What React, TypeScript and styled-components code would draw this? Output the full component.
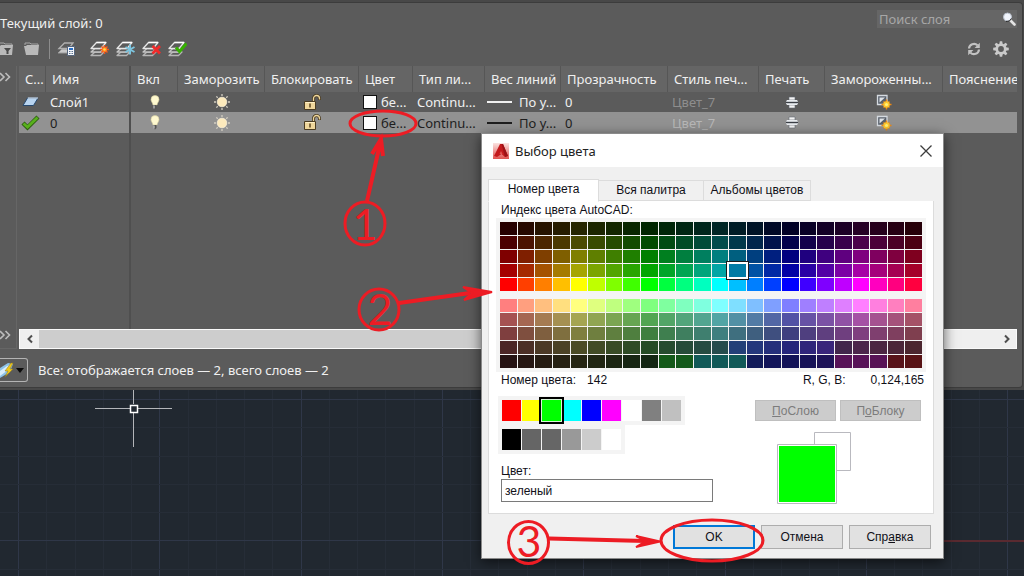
import React, { useState } from "react";
import styled, { createGlobalStyle, css } from "styled-components";

const RED = "#ed1c24";

const GlobalStyle = createGlobalStyle`
  *, *::before, *::after { box-sizing: border-box; }
  body { margin: 0; background: #212830; }
  button, input { font: inherit; color: inherit; margin: 0; padding: 0; border: 0; border-radius: 0; background: none; }
`;

const Page = styled.div`
  position: relative;
  display: flex;
  flex-direction: column;
  min-height: 100vh;
  overflow: hidden;
  background: #484848;
  font-family: "Noto Sans", "Open Sans", sans-serif;
  font-size: 13px;
  line-height: 16px;
  color: #f0f0f0;
`;

/* ---------- layer manager ---------- */

const LayerPanel = styled.section`
  margin: 2px 1px 2px 0;
  padding: 7px 5px 0 0;
  background: #5b5b5b;
  border: 1px solid #3c3c3c;
  border-left: 0;
  border-radius: 0 4px 4px 0;
`;

const TopBar = styled.div`
  display: flex;
  justify-content: space-between;
  height: 26px;
`;

const CurrentLayer = styled.h1`
  margin: 5px 0 0;
  font-size: 13px;
  line-height: 16px;
  font-weight: 400;
`;

const SearchBox = styled.label`
  display: flex;
  align-items: center;
  width: 140px;
  height: 18px;
  padding: 0 1px 0 2px;
  background: #666;
  input { flex: 1; min-width: 0; outline: 0; }
  input::placeholder { color: #a6a6a6; opacity: 1; }
`;

const Toolbar = styled.div`
  display: flex;
  justify-content: space-between;
  align-items: center;
  height: 30px;
  padding: 0 8px 4px 0;
`;

const ToolGroup = styled.div<{ $gap: number }>`
  display: flex;
  align-items: center;
  gap: ${(p) => p.$gap}px;
`;

const Separator = styled.span`
  width: 1px;
  height: 20px;
  margin-left: 2px;
  background: #8c8c8c;
`;

const IconButton = styled.button`
  display: block;
  svg { display: block; }
`;

const Workspace = styled.div`
  display: flex;
  gap: 2px;
`;

const Gutter = styled.div`
  display: flex;
  flex-direction: column;
  justify-content: space-between;
  width: 17px;
  padding: 6px 0 8px;
  border-right: 1px solid #666;
  border-bottom: 1px solid #666;
`;

const GridArea = styled.div`
  flex: 1;
  min-width: 0;
`;

const TableWrap = styled.div`
  display: flex;
  align-items: flex-start;
  height: 263px;
  background: linear-gradient(#4f4f4f, #4f4f4f) 110px 0 / 2px 100% no-repeat;
`;

const Table = styled.table`
  width: 100%;
  table-layout: fixed;
  border-collapse: separate;
  border-spacing: 0;
  th, td {
    overflow: hidden;
    white-space: nowrap;
    padding: 0 0 0 4px;
    text-align: left;
    font-weight: 400;
  }
  th {
    height: 26px;
    padding-left: 6px;
    background: #656565;
    border-right: 1px solid #565656;
  }
  th:last-child { border-right: 0; }
  td:first-child { padding-right: 5px; }
  th:nth-child(2), td:nth-child(2) { border-right: 2px solid #4f4f4f; }
  svg { display: block; }
`;

const Row = styled.tr<{ $selected?: boolean }>`
  height: ${(p) => (p.$selected ? 21 : 20)}px;
  background: ${(p) => (p.$selected ? "#929292" : "transparent")};
  color: ${(p) => (p.$selected ? "#1e1e1e" : "#f0f0f0")};
`;

const Muted = styled.span<{ $selected?: boolean }>`
  color: ${(p) => (p.$selected ? "#b8b8b8" : "#8e8e8e")};
`;

const Centered = styled.span`
  display: flex;
  justify-content: center;
  margin-left: -4px;
`;

const Inline = styled.span<{ $gap: number }>`
  display: flex;
  align-items: center;
  gap: ${(p) => p.$gap}px;
`;

const ColorBox = styled.span`
  flex: none;
  width: 14px;
  height: 14px;
  background: #fff;
  border: 1px solid #111;
`;

const Weight = styled.span`
  flex: none;
  width: 25px;
  height: 2px;
  margin-left: -2px;
  background: currentColor;
`;

const ScrollBar = styled.div`
  display: flex;
  align-items: center;
  height: 20px;
  background: #efefef;
  border: 1px solid #fafafa;
`;

const ScrollButton = styled.button`
  display: flex;
  align-items: center;
  justify-content: center;
  width: 19px;
  height: 18px;
`;

const Track = styled.div`
  flex: 1;
  height: 18px;
`;

const Thumb = styled.div`
  width: 80%;
  height: 100%;
  background: #cdcdcd;
`;

const StatusBar = styled.footer`
  display: flex;
  align-items: center;
  gap: 10px;
  height: 38px;
  padding-top: 3px;
`;

const FilterButton = styled.button`
  display: flex;
  align-items: center;
  width: 28px;
  height: 24px;
  border: 1px solid #b4b4b4;
  border-left: 0;
  border-radius: 0 3px 3px 0;
`;

/* ---------- drawing area ---------- */

const DrawingArea = styled.main`
  flex: 1;
  min-height: 186px;
  background: #212830;
  overflow: hidden;
  svg { display: block; }
`;

/* ---------- colour dialog ---------- */

const Dialog = styled.div`
  position: absolute;
  left: 481px;
  top: 133px;
  width: 463px;
  background: #f0f0f0;
  border: 1px solid #8a8a8a;
  box-shadow: 0 3px 12px rgba(0, 0, 0, 0.6);
  font-family: "Liberation Sans", Arial, sans-serif;
  font-size: 12px;
  line-height: 16px;
  color: #101018;
`;

const TitleBar = styled.header`
  display: flex;
  align-items: center;
  gap: 6px;
  height: 33px;
  padding: 0 10px 0 11px;
  background: #fff;
  font-family: "Noto Sans", "Open Sans", sans-serif;
  h2 { flex: 1; margin: 0; font-size: 13px; font-weight: 400; color: #222; }
`;

const DialogBody = styled.div`
  padding: 12px 9px 0 6px;
`;

const TabList = styled.div`
  display: flex;
  align-items: flex-end;
`;

const Tab = styled.button<{ $active?: boolean }>`
  height: 21px;
  padding-bottom: 1px;
  border: 1px solid #dcdcdc;
  border-left-width: 0;
  background: #f0f0f0;
  ${(p) =>
    p.$active &&
    css`
      height: 23px;
      margin-bottom: -1px;
      padding-bottom: 3px;
      background: #fff;
      border-left-width: 1px;
      border-bottom-color: #fff;
    `}
  &:nth-child(1) { width: 111px; }
  &:nth-child(2) { width: 105px; }
  &:nth-child(3) { width: 107px; }
`;

const TabPanel = styled.div`
  padding: 1px 7px 8px;
  background: #fff;
  border: 1px solid #dcdcdc;
  border-top-width: 0;
`;

const Caption = styled.p`
  margin: 0 0 0 5px;
`;

const PaletteBox = styled.div`
  display: grid;
  gap: 8px;
  padding: 4px;
  background: #f4f4f4;
`;

const Palette = styled.div`
  display: grid;
  grid-template-columns: repeat(24, 1fr);
  grid-auto-rows: 13px;
  gap: 1px;
`;

const Cell = styled.button<{ $color: string; $selected?: boolean }>`
  background: ${(p) => p.$color};
  ${(p) =>
    p.$selected &&
    css`
      position: relative;
      box-shadow: 0 0 0 2px #fff, 0 0 0 3px #1a1a1a;
    `}
`;

const InfoRow = styled.div`
  display: flex;
  padding: 0 2px 0 5px;
  span:nth-child(2) { flex: 1; margin-left: 11px; }
  span:nth-child(4) { margin-left: 25px; }
`;

const Lower = styled.div`
  display: flex;
  justify-content: space-between;
  padding: 8px 5px 0 2px;
`;

const Swatches = styled.div<{ $count: number }>`
  display: grid;
  grid-template-columns: repeat(${(p) => p.$count}, 19px);
  grid-auto-rows: 21px;
  gap: 1px;
  width: max-content;
  padding: 4px;
  background: #f4f4f4;
`;

const Swatch = styled.button<{ $color: string; $selected?: boolean }>`
  background: ${(p) => p.$color};
  ${(p) =>
    p.$selected &&
    css`
      position: relative;
      box-shadow: 0 0 0 1px #d8f4d8, 0 0 0 3px #000;
    `}
`;

const Field = styled.label`
  display: block;
  width: 212px;
  margin: 9px 0 0 3px;
  input {
    display: block;
    width: 100%;
    height: 23px;
    padding: 0 3px;
    background: #fff;
    border: 1px solid #7a7a7a;
    outline: 0;
  }
`;

const SideTools = styled.div`
  padding-top: 4px;
  svg { display: block; margin: 11px 0 0 22px; }
`;

const ButtonRow = styled.div`
  display: flex;
  gap: 4px;
`;

const FlatButton = styled.button`
  width: 81px;
  height: 21px;
  background: #ccc;
  border: 1px solid #bfbfbf;
  color: #7c7c7c;
`;

const DialogFooter = styled.footer`
  display: flex;
  justify-content: flex-end;
  gap: 6px;
  padding: 11px 3px 9px 0;
`;

const PushButton = styled.button<{ $primary?: boolean }>`
  width: 82px;
  height: 24px;
  background: #e1e1e1;
  border: ${(p) => (p.$primary ? "2px solid #0078d7" : "1px solid #adadad")};
`;

const Annotations = styled.svg`
  position: absolute;
  left: 0;
  top: 0;
  pointer-events: none;
`;

/* ---------- icons ---------- */

const FolderIcon = ({ filter }: { filter?: boolean }) => (
  <svg width={filter ? 14 : 16} height="14" viewBox={filter ? "2 0 14 14" : "0 0 16 14"}>
    <path d="M1 3V1h5l1 1h7v2" fill="none" stroke="#a6a6a6" />
    <path d="M0 4h2l1-1h12l-1 10H2z" fill="#b9b9b9" />
    {filter && <path d="M6 6h7L10.500 9v3h-2V9z" fill="#4a4a4a" />}
  </svg>
);

const Sheets = () => (
  <g fill="#5b5b5b" stroke="#b4b4b4" strokeWidth="1.300" strokeLinejoin="round">
    <path d="M1 15.500 5 12H14L10.500 15.500z" />
    <path d="M1 12 5 8.500H14L10.500 12z" stroke="#c4c4c4" />
    <path d="M1 8.500 6.500 2.500H16L11 8.500z" stroke="#e6e6e6" />
    <path d="M6.500 2.500H16" stroke="#fff" />
  </g>
);

type LayerKind = "new" | "frozen" | "delete" | "current";

const LayerIcon = ({ kind }: { kind: LayerKind }) => (
  <svg width="19" height="18" viewBox="0 0 19 18">
    <Sheets />
    {kind === "new" && (
      <>
        <path d="M14.500 5v9M10 9.500h9M11.500 6.500l6 6M17.500 6.500l-6 6" stroke="#f0561d" strokeWidth="1.600" />
        <circle cx="14.500" cy="9.500" r="2.600" fill="#ff7a1e" />
        <circle cx="14.500" cy="9.500" r="1.300" fill="#ffe14a" />
      </>
    )}
    {kind === "frozen" && (
      <path d="M14 4.500v10M9.500 7l9 5M18.500 7l-9 5" stroke="#7cc4de" strokeWidth="2" />
    )}
    {kind === "delete" && <path d="M10.500 6l7.500 7.500M18 6l-7.500 7.500" stroke="#f02a2a" strokeWidth="2.800" />}
    {kind === "current" && (
      <path d="M8 7.500l3.500 4L18.500 3.500" fill="none" stroke="#35b000" strokeWidth="3" />
    )}
  </svg>
);

const LayerStatesIcon = () => (
  <svg width="19" height="18" viewBox="0 0 19 18">
    <path d="M1 13 5 9h8v4z" fill="#c8c8c8" stroke="#9a9a9a" />
    <path d="M2 8.500 7.500 3H16l-4 5.500z" fill="#5b5b5b" stroke="#b0b0b0" strokeWidth="1.300" />
    <path d="M10.500 6.500h7v9h-7z" fill="#f4f6fa" stroke="#55657c" />
    <path d="M12 8h4v2h-4z" fill="#2c6fc4" />
    <path d="M12 11.500h4M12 13.500h4" stroke="#5a7290" strokeDasharray="1 .5" />
  </svg>
);

const RefreshIcon = () => (
  <svg width="14" height="14" viewBox="0 0 14 14">
    <path d="M2 6.500A5 5 0 0 1 10.500 3.300M12 7.500A5 5 0 0 1 3.500 10.700" fill="none" stroke="#c2c2c2" strokeWidth="2.200" />
    <path d="M12.800.8V6H7.600zM1.200 13.200V8h5.200z" fill="#c2c2c2" />
  </svg>
);

const GearIcon = () => (
  <svg width="16" height="16" viewBox="0 0 16 16">
    <circle cx="8" cy="8" r="4.200" fill="none" stroke="#cacaca" strokeWidth="2.600" />
    {[0, 45, 90, 135, 180, 225, 270, 315].map((a) => (
      <path key={a} d="M6.300 3.300 6.800 .2h2.400l.5 3.100z" fill="#cacaca" transform={`rotate(${a} 8 8)`} />
    ))}
  </svg>
);

const SearchIcon = () => (
  <svg width="14" height="14" viewBox="0 0 14 14">
    <path d="M8 8l4.500 4.500" stroke="#e4e4e4" strokeWidth="2.600" strokeLinecap="round" />
    <circle cx="5.500" cy="5" r="4" fill="#f1f5fc" stroke="#b9c0cc" />
    <path d="M9.500 6.500Q8 10 4 9.500" fill="none" stroke="#2c2c2c" />
  </svg>
);

const Chevrons = () => (
  <svg width="12" height="10" viewBox="0 0 12 10">
    <path d="M0 1l4 4-4 4M5.500 1l4 4-4 4" fill="none" stroke="#bdbdbd" strokeWidth="1.600" />
  </svg>
);

const SheetIcon = () => (
  <svg width="17" height="12" viewBox="0 0 17 12">
    <path d="M1 9.500 5.500 2H16l-4.500 7.500z" fill="#b8d4f0" stroke="#27496f" />
    <path d="M5.800 2H16" stroke="#eaf4ff" />
  </svg>
);

const CheckIcon = () => (
  <svg width="19" height="16" viewBox="0 0 19 16">
    <path d="M2 8 6.500 12.500 17 2" fill="none" stroke="#2c5a10" strokeWidth="4.400" />
    <path d="M2.500 8.500 6.500 12 16.500 2.500" fill="none" stroke="#58b01c" strokeWidth="2.800" />
  </svg>
);

const BulbIcon = () => (
  <svg width="10" height="15" viewBox="0 0 10 15">
    <path d="M5 .5a4 4 0 0 1 4 4c0 2-1.500 3-2 5.500H3C2.500 7.500 1 6.500 1 4.500a4 4 0 0 1 4-4z" fill="#fff9d0" stroke="#d8d1a0" strokeWidth=".6" />
    <path d="M3.500 10h3v3l-1.500 1.500L3.500 13z" fill="#555" />
    <path d="M4 10.500v3" stroke="#ddd" />
  </svg>
);

const SunIcon = () => (
  <svg width="18" height="18" viewBox="0 0 18 18">
    {[0, 45, 90, 135, 180, 225, 270, 315].map((a) => (
      <path key={a} d="M9 1v2" stroke="#d3cec2" strokeWidth="1.300" transform={`rotate(${a} 9 9)`} />
    ))}
    <circle cx="9" cy="9" r="4.800" fill="#fdeabc" stroke="#fff5dc" strokeWidth=".7" />
  </svg>
);

const LockIcon = () => (
  <svg width="18" height="17" viewBox="0 0 18 17">
    <path d="M10.500 8V4.500a3 3 0 0 1 6 0v1.500" fill="none" stroke="#4b3c22" strokeWidth="3" />
    <path d="M10.500 8V4.500a3 3 0 0 1 6 0v1" fill="none" stroke="#efd79c" strokeWidth="1.300" />
    <path d="M1.500 7.500h11v8h-11z" fill="#f0d79c" stroke="#4b3c22" />
    <path d="M7 9.500v4" stroke="#5b4520" strokeWidth="1.500" />
    <path d="M2.500 8.500h9" stroke="#fff1c8" />
  </svg>
);

const PrinterIcon = () => (
  <svg width="12" height="13" viewBox="0 0 12 13">
    <path d="M3 1h6v3H3zM3 9h6v3H3z" fill="#f4f4f4" stroke="#626873" strokeWidth=".6" />
    <path d="M1 4h10l1 1.500v2L11 9H1L0 7.500v-2z" fill="#e8ebef" />
    <path d="M0 6.500h12" stroke="#3b3f46" strokeWidth="1.400" />
  </svg>
);

const ViewportIcon = () => (
  <svg width="16" height="16" viewBox="0 0 16 16">
    <path d="M1.500 1.500h9.500v9H1.500z" fill="#59616c" stroke="#d5dae0" strokeWidth="1.300" />
    <path d="M3.500 3.500H9L3.500 8.500z" fill="#dfe3e8" />
    <path d="M10.500 5.500v10M5.500 10.500h10M7.500 7.500l6 6M13.500 7.500l-6 6" stroke="#f08a12" strokeWidth="1.500" />
    <circle cx="10.500" cy="10.500" r="3.200" fill="#ffc62c" />
    <circle cx="10.500" cy="10.500" r="1.600" fill="#fff27a" />
  </svg>
);

const ArrowIcon = ({ right }: { right?: boolean }) => (
  <svg width="8" height="10" viewBox="0 0 8 10">
    <path d={right ? "M2 1.500 5.500 5 2 8.500" : "M6 1.500 2.500 5 6 8.500"} fill="none" stroke="#4e4e4e" strokeWidth="2" />
  </svg>
);

const FilterIcon = () => (
  <svg width="27" height="20" viewBox="0 0 27 20">
    <path d="M0 8 8 3l5 1-3 8-10 6z" fill="#8cc2e8" />
    <path d="M0 11 7 6l4-1-3 5-8 6z" fill="#d9eefb" />
    <path d="M11 3 5 11h3l-3 6 8-8h-3l3-6z" fill="#f2c91a" stroke="#8a7420" strokeWidth=".5" />
    <path d="M16 8h8l-4 5z" fill="#0c0c0c" />
  </svg>
);

const AutocadIcon = () => (
  <svg width="16" height="16" viewBox="0 0 16 16">
    <defs>
      <linearGradient id="logoBack" x1="0" y1="0" x2="0" y2="1">
        <stop offset="0" stopColor="#fbe3e1" />
        <stop offset="1" stopColor="#e0524f" />
      </linearGradient>
    </defs>
    <path d="M0 0h16v16H0z" fill="url(#logoBack)" />
    <path d="M7 1h3l5 12-3 1-3.500-3L4 14l-3-1z" fill="#c3191c" />
    <path d="M8.500 1 10 1l5 12-3 1z" fill="#9c1216" />
    <path d="M8 8l1.500 3h-3z" fill="#df5350" />
  </svg>
);

const CloseIcon = () => (
  <svg width="14" height="14" viewBox="0 0 14 14">
    <path d="M1.500 1.500l11 11M12.500 1.500l-11 11" stroke="#3c3c3c" strokeWidth="1.300" />
  </svg>
);

const PreviewIcon = () => (
  <svg width="75" height="73" viewBox="0 0 75 73">
    <path d="M37.500.5h36v38h-36z" fill="#fff" stroke="#b9b9bf" />
    <path d="M.5 12.500h59v59H.5z" fill="#fff" stroke="#b9b9bf" />
    <path d="M2 14h56v56H2z" fill="#0f0" />
  </svg>
);

/* ---------- palette data ---------- */

const hueToRgb = (hue: number): number[] => {
  const part = (shift: number) => {
    const k = (shift + hue / 60) % 6;
    return 1 - Math.max(0, Math.min(k, 4 - k, 1));
  };
  return [part(5), part(3), part(1)];
};

const makeRow = (value: number, pale: boolean) =>
  Array.from({ length: 24 }, (_, i) => {
    const rgb = hueToRgb(i * 15).map((c) => Math.floor(value * (pale ? (c + 1) / 2 : c)));
    return `rgb(${rgb.join(",")})`;
  });

const levels = [38, 76, 127, 165, 255];
const deepRows = levels.map((v) => makeRow(v, false));
const paleRows = [...levels].reverse().map((v) => makeRow(v, true));

paleRows[3].splice(13, 6, "#234078", "#24377c", "#252f7b", "#25257b", "#2f257b", "#39257b");
paleRows[4].splice(
  9, 15,
  "#145a1a", "#145a1c", "#125a58", "#125a58", "#125a58", "#131c5a", "#13165a", "#131358",
  "#171358", "#1e1358", "#581358", "#581358", "#581356", "#58131a", "#581316",
);

const basicColors = ["#f00", "#ff0", "#0f0", "#0ff", "#00f", "#f0f", "#fff", "#808080", "#c0c0c0"];
const grays = ["#000", "#656565", "#666", "#999", "#ccc", "#fff"];

const columns: [string, number?][] = [
  ["С...", 27], ["Имя", 85], ["Вкл", 47], ["Заморозить", 87], ["Блокировать", 94], ["Цвет", 54],
  ["Тип ли...", 72], ["Вес линий", 76], ["Прозрачность", 107], ["Стиль печ...", 91],
  ["Печать", 66], ["Замороженны...", 118], ["Пояснение"],
];

const layers = [
  { name: "Слой1", current: false },
  { name: "0", current: true },
];

const range = (from: number, to: number) => Array.from({ length: to - from }, (_, i) => from + i);

const DrawingGrid = () => (
  <svg width="100%" height="186">
    <rect width="100%" height="186" fill="#212830" />
    {range(0, 90).map((i) => {
      const x = Math.round(18 + (i * 141.3) / 5);
      return <rect key={i} x={x} width="1" height="186" fill={i % 5 ? "#262d37" : "#2f3748"} />;
    })}
    {range(0, 7).map((i) => {
      const y = Math.round(9 + (i * 141.3) / 5);
      return <rect key={i} y={y} width="100%" height="1" fill={i % 5 ? "#262d37" : "#2f3748"} />;
    })}
    <rect x="583" y="150" width="100%" height="2" fill="#5a2a30" />
    <path d="M95 18.500H130M138 18.500H172M133.500 0V14M133.500 23V57" stroke="#b4b6ba" />
    <path d="M130.500 15.500h7v7h-7z" fill="none" stroke="#fff" strokeWidth="1.500" />
  </svg>
);

export default function App() {
  const [color, setColor] = useState("зеленый");

  return (
    <Page>
      <GlobalStyle />
      <LayerPanel>
        <TopBar>
          <CurrentLayer>Текущий слой: 0</CurrentLayer>
          <SearchBox>
            <input type="text" placeholder="Поиск слоя" aria-label="Поиск слоя" />
            <SearchIcon />
          </SearchBox>
        </TopBar>
        <Toolbar>
          <ToolGroup $gap={7}>
            <ToolGroup $gap={10}>
              <IconButton aria-label="Фильтр по свойствам"><FolderIcon filter /></IconButton>
              <IconButton aria-label="Групповой фильтр"><FolderIcon /></IconButton>
            </ToolGroup>
            <Separator />
            <ToolGroup $gap={14}>
              <IconButton aria-label="Состояния слоев"><LayerStatesIcon /></IconButton>
              <ToolGroup $gap={7}>
                <IconButton aria-label="Новый слой"><LayerIcon kind="new" /></IconButton>
                <IconButton aria-label="Новый замороженный слой"><LayerIcon kind="frozen" /></IconButton>
                <IconButton aria-label="Удалить слой"><LayerIcon kind="delete" /></IconButton>
                <IconButton aria-label="Сделать текущим"><LayerIcon kind="current" /></IconButton>
              </ToolGroup>
            </ToolGroup>
          </ToolGroup>
          <ToolGroup $gap={12}>
            <IconButton aria-label="Обновить"><RefreshIcon /></IconButton>
            <IconButton aria-label="Параметры"><GearIcon /></IconButton>
          </ToolGroup>
        </Toolbar>
        <Workspace>
          <Gutter>
            <IconButton aria-label="Развернуть фильтры"><Chevrons /></IconButton>
            <IconButton aria-label="Развернуть дерево"><Chevrons /></IconButton>
          </Gutter>
          <GridArea>
            <TableWrap>
              <Table>
                <colgroup>
                  {columns.map(([title, width]) => <col key={title} width={width} />)}
                </colgroup>
                <thead>
                  <tr>{columns.map(([title]) => <th key={title} scope="col">{title}</th>)}</tr>
                </thead>
                <tbody>
                  {layers.map(({ name, current }) => (
                    <Row key={name} $selected={current}>
                      <td><Centered>{current ? <CheckIcon /> : <SheetIcon />}</Centered></td>
                      <td>{name}</td>
                      <td><Centered><BulbIcon /></Centered></td>
                      <td><Centered><SunIcon /></Centered></td>
                      <td><Centered><LockIcon /></Centered></td>
                      <td><Inline $gap={4}><ColorBox />бе...</Inline></td>
                      <td>Continu...</td>
                      <td><Inline $gap={7}><Weight />По у...</Inline></td>
                      <td>0</td>
                      <td><Muted $selected={current}>Цвет_7</Muted></td>
                      <td><Centered><PrinterIcon /></Centered></td>
                      <td><Centered><ViewportIcon /></Centered></td>
                      <td />
                    </Row>
                  ))}
                </tbody>
              </Table>
            </TableWrap>
            <ScrollBar>
              <ScrollButton aria-label="Прокрутить влево"><ArrowIcon /></ScrollButton>
              <Track><Thumb /></Track>
              <ScrollButton aria-label="Прокрутить вправо"><ArrowIcon right /></ScrollButton>
            </ScrollBar>
          </GridArea>
        </Workspace>
        <StatusBar>
          <FilterButton aria-label="Применить фильтр"><FilterIcon /></FilterButton>
          <span>Все: отображается слоев — 2, всего слоев — 2</span>
        </StatusBar>
      </LayerPanel>

      <DrawingArea><DrawingGrid /></DrawingArea>

      <Dialog role="dialog" aria-labelledby="dialog-title">
        <TitleBar>
          <AutocadIcon />
          <h2 id="dialog-title">Выбор цвета</h2>
          <IconButton aria-label="Закрыть"><CloseIcon /></IconButton>
        </TitleBar>
        <DialogBody>
          <TabList role="tablist">
            <Tab role="tab" aria-selected="true" $active>Номер цвета</Tab>
            <Tab role="tab" aria-selected="false">Вся палитра</Tab>
            <Tab role="tab" aria-selected="false">Альбомы цветов</Tab>
          </TabList>
          <TabPanel role="tabpanel">
            <Caption>Индекс цвета AutoCAD:</Caption>
            <PaletteBox>
              {[deepRows, paleRows].map((rows, block) => (
                <Palette key={block}>
                  {rows.flatMap((row, r) =>
                    row.map((c, i) => (
                      <Cell
                        key={`${r}-${i}`}
                        $color={c}
                        $selected={block === 0 && r === 3 && i === 13}
                        aria-label={c}
                      />
                    )),
                  )}
                </Palette>
              ))}
            </PaletteBox>
            <InfoRow>
              <span>Номер цвета:</span>
              <span>142</span>
              <span>R, G, B:</span>
              <span>0,124,165</span>
            </InfoRow>
            <Lower>
              <div>
                <Swatches $count={9}>
                  {basicColors.map((c) => <Swatch key={c} $color={c} $selected={c === "#0f0"} aria-label={c} />)}
                </Swatches>
                <Swatches $count={6}>
                  {grays.map((c) => <Swatch key={c} $color={c} aria-label={c} />)}
                </Swatches>
                <Field>
                  Цвет:
                  <input type="text" value={color} onChange={(e) => setColor(e.target.value)} />
                </Field>
              </div>
              <SideTools>
                <ButtonRow>
                  <FlatButton disabled><u>П</u>оСлою</FlatButton>
                  <FlatButton disabled>П<u>о</u>Блоку</FlatButton>
                </ButtonRow>
                <PreviewIcon />
              </SideTools>
            </Lower>
          </TabPanel>
          <DialogFooter>
            <PushButton $primary>OK</PushButton>
            <PushButton>Отмена</PushButton>
            <PushButton>Спр<u>а</u>вка</PushButton>
          </DialogFooter>
        </DialogBody>
      </Dialog>

      <Annotations width="1024" height="576" fill="none" stroke={RED} strokeWidth="3">
        <ellipse cx="383" cy="123.500" rx="33" ry="12.500" />
        <ellipse cx="365" cy="223.500" rx="20" ry="21.500" />
        <path d="M367 201 380 144M372 154 381 139 383 156" strokeWidth="4" />
        <ellipse cx="379" cy="309.500" rx="20" ry="20.500" />
        <path d="M399 303 470 293" strokeWidth="4" />
        <path d="M463 287 492 292 464 300 472 293z" fill={RED} strokeWidth="2" />
        <ellipse cx="528.500" cy="542.500" rx="20" ry="21" />
        <path d="M549 538.500 645 541" strokeWidth="4" />
        <path d="M636 536 660 541.500 636 547 646 541z" fill={RED} strokeWidth="2" />
        <ellipse cx="712" cy="540.500" rx="51" ry="20.500" />
        <g fill={RED} stroke="none" fontFamily="Lato, sans-serif" fontSize="43" textAnchor="middle">
          <text x="365" y="240">1</text>
          <text x="380" y="325">2</text>
          <text x="529" y="557">3</text>
        </g>
      </Annotations>
    </Page>
  );
}
